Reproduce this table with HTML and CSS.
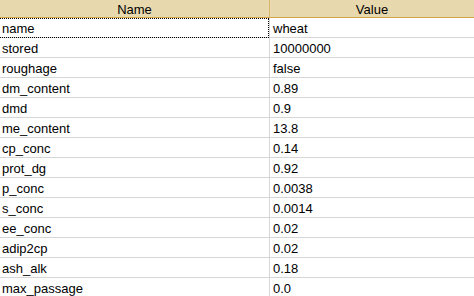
FILE: index.html
```html
<!DOCTYPE html>
<html lang="en">
<head>
  <meta charset="UTF-8" />
  <title>Feed properties</title>
  <link rel="stylesheet" href="styles.css">
</head>
<body>
  <div class="grid">
    <div class="head">
      <div class="head-cell name-col">Name</div>
      <div class="head-cell value-col">Value</div>
    </div>

    <div class="row">
      <div class="cell name-col focused">name</div>
      <div class="cell value-col">wheat</div>
    </div>
    <div class="row">
      <div class="cell name-col">stored</div>
      <div class="cell value-col">10000000</div>
    </div>
    <div class="row">
      <div class="cell name-col">roughage</div>
      <div class="cell value-col">false</div>
    </div>
    <div class="row">
      <div class="cell name-col">dm_content</div>
      <div class="cell value-col">0.89</div>
    </div>
    <div class="row">
      <div class="cell name-col">dmd</div>
      <div class="cell value-col">0.9</div>
    </div>
    <div class="row">
      <div class="cell name-col">me_content</div>
      <div class="cell value-col">13.8</div>
    </div>
    <div class="row">
      <div class="cell name-col">cp_conc</div>
      <div class="cell value-col">0.14</div>
    </div>
    <div class="row">
      <div class="cell name-col">prot_dg</div>
      <div class="cell value-col">0.92</div>
    </div>
    <div class="row">
      <div class="cell name-col">p_conc</div>
      <div class="cell value-col">0.0038</div>
    </div>
    <div class="row">
      <div class="cell name-col">s_conc</div>
      <div class="cell value-col">0.0014</div>
    </div>
    <div class="row">
      <div class="cell name-col">ee_conc</div>
      <div class="cell value-col">0.02</div>
    </div>
    <div class="row">
      <div class="cell name-col">adip2cp</div>
      <div class="cell value-col">0.02</div>
    </div>
    <div class="row">
      <div class="cell name-col">ash_alk</div>
      <div class="cell value-col">0.18</div>
    </div>
    <div class="row">
      <div class="cell name-col">max_passage</div>
      <div class="cell value-col">0.0</div>
    </div>
  </div>
</body>
</html>
```

FILE: styles.css
```css
* {
  box-sizing: border-box;
  margin: 0;
  padding: 0;
}

html, body {
  height: 100%;
  overflow: hidden;
}

body {
  font-family: 'Liberation Sans', Arial, sans-serif;
  font-size: 13px;
  color: #000;
  background: #ffffff;
}

.grid {
  width: 474px;
}

/* header */
.head {
  display: flex;
  height: 18px;
  background: #e7d8ae;
  border-bottom: 1px solid #d2a54b;
}

.head-cell {
  padding-top: 2px;
  line-height: 15px;
  text-align: center;
  color: #000;
}

.head .name-col {
  border-right: 1px solid #d9b76f;
}

/* rows */
.row {
  display: flex;
  height: 20px;
}

.name-col {
  width: 270px;
  flex: none;
}

.value-col {
  flex: 1;
}

.cell {
  height: 20px;
  padding-top: 2px;
  line-height: 17px;
  border-bottom: 1px solid #d6d6d6;
  white-space: nowrap;
}

.cell.name-col {
  padding-left: 2px;
  border-right: 1px solid #d6d6d6;
}

.cell.value-col {
  padding-left: 3px;
}

.focused {
  position: relative;
}

.focused::after {
  content: "";
  position: absolute;
  top: 0;
  left: 0;
  right: 0;
  bottom: -1px;
  border-top: 1px dotted #000;
  border-right: 1px dotted #000;
  border-bottom: 1px dotted #000;
}
```
